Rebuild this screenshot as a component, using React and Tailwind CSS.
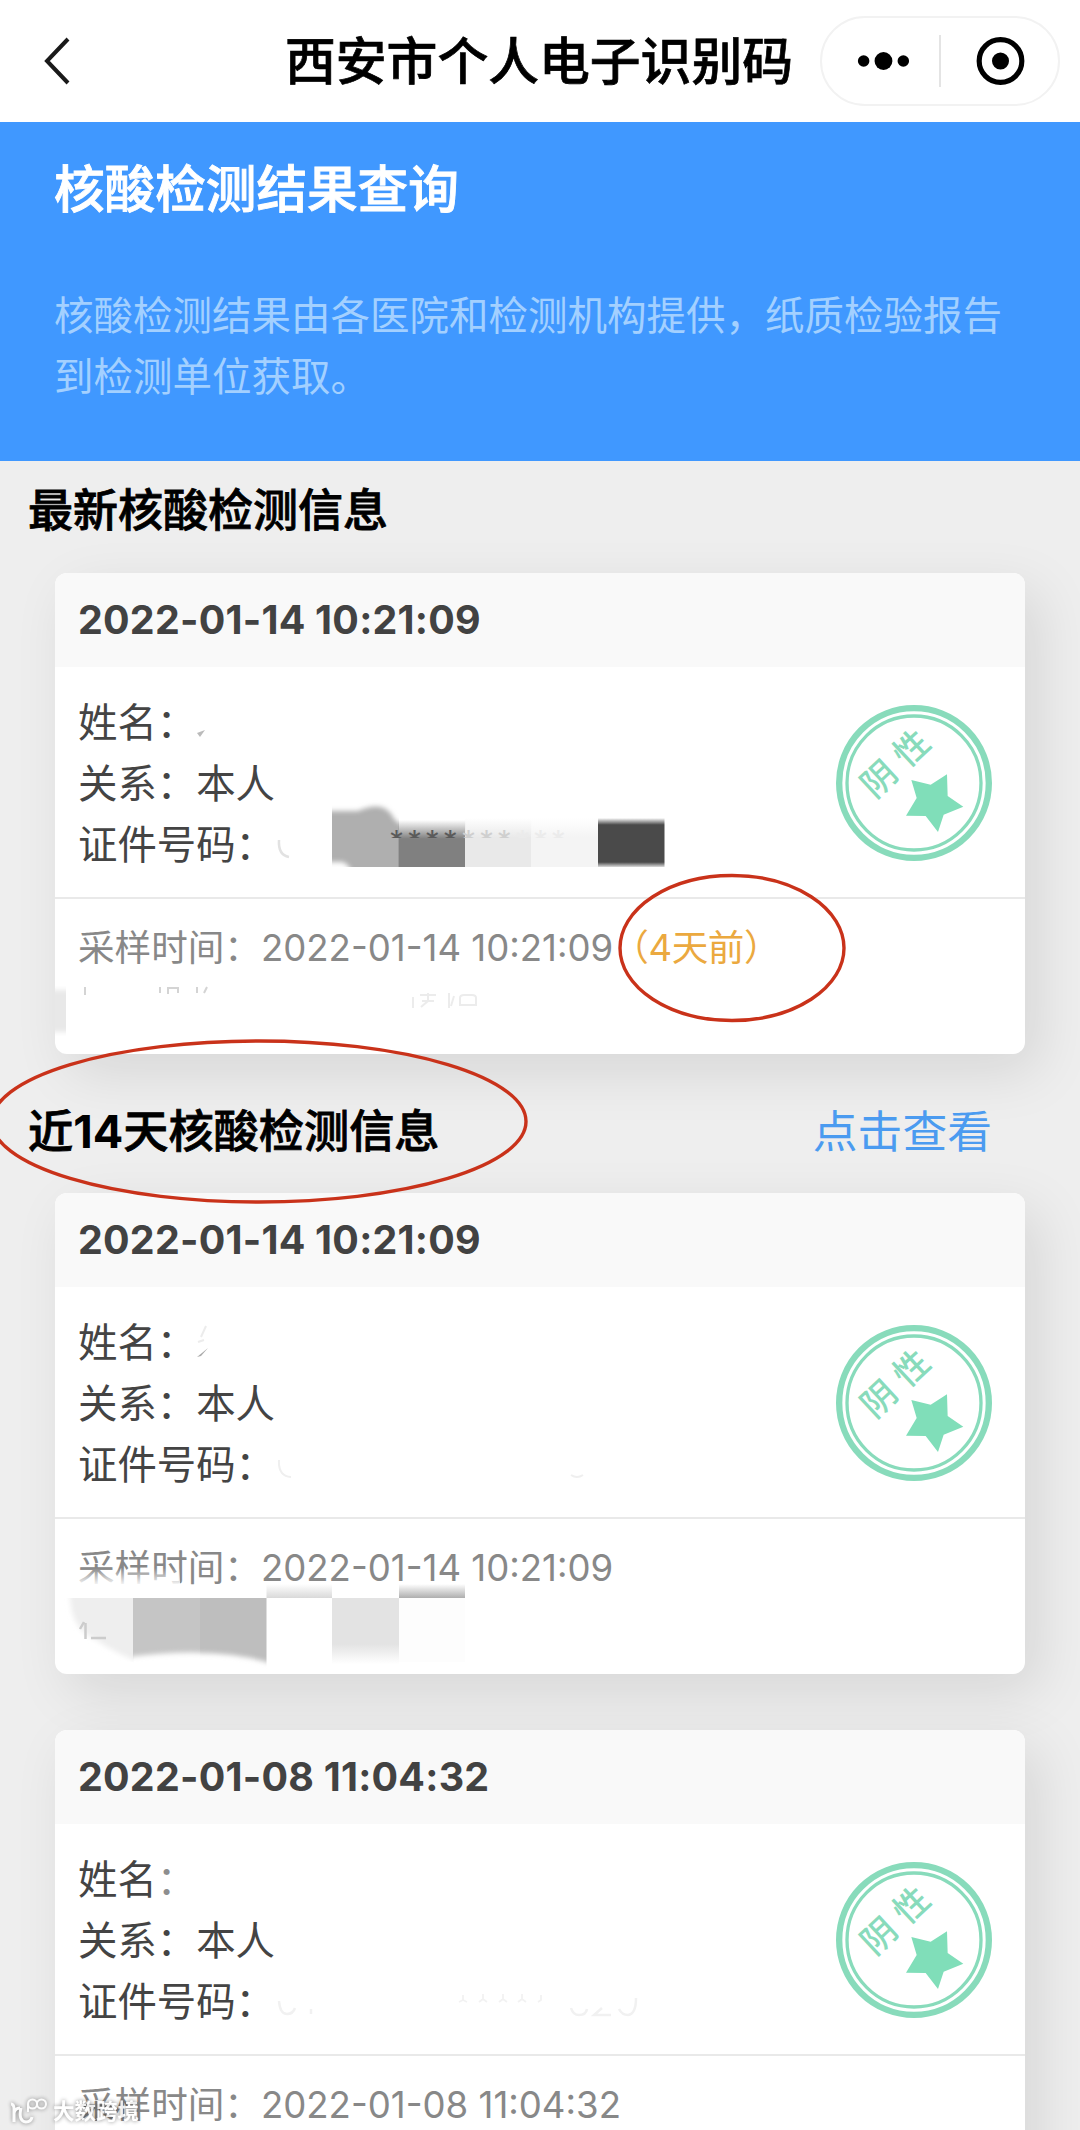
import React from 'react';

const registros = [
  { id: 1, fecha: '2022-01-14 10:21:09', hace: '（4天前）' },
  { id: 2, fecha: '2022-01-14 10:21:09' },
  { id: 3, fecha: '2022-01-08 11:04:32' },
];

function Header() {
  return (
    <header className="flex h-[122px] shrink-0 items-center bg-white pr-5 pl-[43px]">
      <svg className="h-[50px] w-[30px]" viewBox="0 0 30 50" fill="none">
        <path d="M25 3 L4 25 L25 47" stroke="#1a1a1a" strokeWidth="4" />
      </svg>
      <h1 className="mt-[2px] ml-[212px] text-[50.8px] leading-none font-medium whitespace-nowrap text-black [-webkit-text-stroke:0.7px_#000]">西安市个人电子识别码</h1>
      <div className="ml-auto flex h-[90px] w-[240px] items-center rounded-full border-2 border-[#f2f2f2]">
        <svg className="h-[50px] w-[118px]" viewBox="0 0 118 50">
          <circle cx="42" cy="25" r="5.8" />
          <circle cx="62" cy="25" r="9" />
          <circle cx="82" cy="25" r="5.8" />
        </svg>
        <div className="h-[52px] w-[2px] bg-[#e4e4e4]" />
        <svg className="h-[50px] w-[118px]" viewBox="0 0 118 50">
          <circle cx="60" cy="25" r="21.5" fill="none" stroke="#000" strokeWidth="5.2" />
          <circle cx="60" cy="25" r="8.6" />
        </svg>
      </div>
    </header>
  );
}

// sello verde de resultado negativo
function Sello() {
  return (
    <svg className="h-[156px] w-[156px]" viewBox="77 44 468 468">
      <circle cx="311" cy="278" r="224.5" fill="none" stroke="#88dbbb" strokeWidth="19" />
      <circle cx="311" cy="278" r="201" fill="none" stroke="#88dbbb" strokeWidth="10" />
      <polygon points="303,269 361,283 410,252 412,317 459,349 400,373 383,425 346,377 287,376 319,323" fill="#80deb9" />
      <g fill="#88dbbb" fontSize="104" fontWeight="500" textAnchor="middle">
        <text transform="translate(205 265) rotate(-43)" y="38">阴</text>
        <text transform="translate(303 173) rotate(-43)" y="38">性</text>
      </g>
    </svg>
  );
}

function Tapado1() {
  return (
    <svg className="absolute top-0 left-0 h-[481px] w-[970px]" viewBox="55 573 970 481">
      <defs>
        <filter id="suave" x="-20%" y="-20%" width="140%" height="140%"><feGaussianBlur stdDeviation="2.4" /></filter>
        <linearGradient id="g1" x1="0" y1="0" x2="0" y2="1">
          <stop offset="0" stopColor="#808080" stopOpacity="0" />
          <stop offset="0.4" stopColor="#808080" />
        </linearGradient>
        <linearGradient id="g2" x1="0" y1="0" x2="0" y2="1">
          <stop offset="0" stopColor="#e9e9e9" stopOpacity="0" />
          <stop offset="0.4" stopColor="#e9e9e9" />
        </linearGradient>
        <linearGradient id="g3" x1="0" y1="0" x2="0" y2="1">
          <stop offset="0" stopColor="#f4f4f4" stopOpacity="0" />
          <stop offset="0.4" stopColor="#f4f4f4" />
          <stop offset="1" stopColor="#f4f4f4" />
        </linearGradient>
        <linearGradient id="g4" x1="0" y1="0" x2="0" y2="1">
          <stop offset="0" stopColor="#4a4a4a" stopOpacity="0" />
          <stop offset="0.14" stopColor="#4a4a4a" />
          <stop offset="0.9" stopColor="#4a4a4a" />
          <stop offset="1" stopColor="#4a4a4a" stopOpacity="0.2" />
        </linearGradient>
        <clipPath id="c1"><rect x="332" y="796" width="67" height="71" /></clipPath>
        <clipPath id="c2"><rect x="380" y="826" width="220" height="12" /></clipPath>
        <clipPath id="c3"><rect x="55" y="980" width="11" height="60" /></clipPath>
      </defs>
      <path d="M197 733 L205 730 L200 737 Z" fill="#bbb" />
      <path d="M279 840 Q278 855 289 857" fill="none" stroke="#e2e2e2" strokeWidth="2.5" />
      <g clipPath="url(#c1)">
        <path d="M320 811 H358 Q385 799 394 819 Q398 824 410 828 V880 H354 Q350 863 342 862 H320 Z" fill="#afafaf" filter="url(#suave)" />
      </g>
      <rect x="398.600" y="820" width="66.600" height="47" fill="url(#g1)" />
      <rect x="465" y="818" width="66.500" height="49" fill="url(#g2)" />
      <rect x="531.500" y="818" width="66.500" height="49" fill="url(#g3)" />
      <rect x="598" y="818" width="66.500" height="49" fill="url(#g4)" />
      <g clipPath="url(#c2)" fontSize="30" fill="#5a5a5a">
        <text x="389" y="852" letterSpacing="2.9">****</text>
        <text x="461" y="852" letterSpacing="2.9" fill="#cfcfcf">***</text>
        <text x="515" y="852" letterSpacing="2.9" fill="#ebebeb">***</text>
      </g>
      {/* restos del texto borrado */}
      <g clipPath="url(#c3)">
        <rect x="50" y="990" width="30" height="42" fill="#e8e8e8" filter="url(#suave)" />
      </g>
      <g fill="none" strokeWidth="2">
        <path d="M85 987 V995 M160 987 V993 M168 994 V988 H178 V993 M197 987 V993 M207 987 L204 993" stroke="#d4d4d4" />
        <path d="M413 997 V1008 M420 995 H436 M422 1001 H434 M428 993 V1001 L421 1007 M449 993 V1008 M454 996 L451 1006 M460 998 Q460 995 464 995 H472 Q476 995 476 998 V1005 H460 Z" stroke="#ececec" />
      </g>
    </svg>
  );
}

function Tapado2() {
  return (
    <svg className="absolute top-0 left-0 h-[481px] w-[970px]" viewBox="55 1193 970 481">
      <defs>
        <linearGradient id="h1" x1="0" y1="0" x2="0" y2="1">
          <stop offset="0" stopColor="#fff" stopOpacity="0" />
          <stop offset="1" stopColor="#fff" />
        </linearGradient>
        <linearGradient id="h2" x1="0" y1="0" x2="0" y2="1">
          <stop offset="0" stopColor="#fff" />
          <stop offset="1" stopColor="#d9d9d9" />
        </linearGradient>
        <linearGradient id="h3" x1="0" y1="0" x2="0" y2="1">
          <stop offset="0" stopColor="#fff" />
          <stop offset="1" stopColor="#aeaeae" />
        </linearGradient>
        <linearGradient id="h4" x1="0" y1="0" x2="0" y2="1">
          <stop offset="0.7" stopColor="#e3e3e3" />
          <stop offset="1" stopColor="#fff" />
        </linearGradient>
        <clipPath id="d1"><rect x="60" y="1598" width="73.500" height="64" /></clipPath>
        <clipPath id="d2"><rect x="133" y="1598" width="67" height="72" /></clipPath>
        <clipPath id="d3"><rect x="200" y="1598" width="66.500" height="72" /></clipPath>
      </defs>
      <path d="M198 1342 L204 1340 M201 1337 L206 1326" fill="none" stroke="#ececec" strokeWidth="2" />
      <path d="M197 1357 L208 1348 L201 1356 Z" fill="#aaa" />
      <path d="M279 1460 Q278 1476 291 1477 M571 1475 Q577 1479 583 1475" fill="none" stroke="#efefef" strokeWidth="2" />
      <rect x="70" y="1568" width="110" height="18" fill="url(#h1)" />
      <g clipPath="url(#d1)">
        <path d="M70 1588 H145 V1664 Q118 1655 96 1640 Q68 1628 70 1588 Z" fill="#eee" filter="url(#suave)" />
      </g>
      <path d="M80 1629 L84 1622 M85.500 1623 V1639 M91 1638 H106" fill="none" stroke="#ccc" strokeWidth="2.5" />
      <g clipPath="url(#d2)">
        <path d="M120 1585 H210 V1653 Q170 1651 120 1658 Z" fill="#c5c5c5" filter="url(#suave)" />
      </g>
      <g clipPath="url(#d3)">
        <path d="M190 1585 H280 V1666 Q240 1652 190 1653 Z" fill="#bebebe" filter="url(#suave)" />
      </g>
      <rect x="266.500" y="1584" width="65.500" height="14" fill="url(#h2)" />
      <rect x="332" y="1598" width="67" height="66" fill="url(#h4)" />
      <rect x="399" y="1584" width="66" height="14" fill="url(#h3)" />
      <rect x="399" y="1598" width="66" height="64" fill="#fdfdfd" />
    </svg>
  );
}

function Tapado3() {
  return (
    <svg className="absolute top-0 left-0 h-[400px] w-[970px]" viewBox="55 1730 970 400">
      <rect x="160" y="1866" width="14" height="30" fill="#fff" opacity="0.4" />
      <g fill="none" stroke="#f1f1f1" strokeWidth="2.5">
        <path d="M279 2001 Q280 2014 287 2014 Q293 2014 295 2008 M311 2009 V2014" />
        <path d="M571 2008 Q573 2015 579 2015 Q586 2015 587 2009 M602 2008 L594 2015 H611 M619 2009 Q622 2015 628 2015 Q636 2014 636 1998" />
      </g>
      <g fill="none" stroke="#f2f2f2" strokeWidth="1.800">
        <path d="M463 1995 V2000 L459 2002 M463 2000 L467 2002 M483 1994 V1999 L479 2002 M483 1999 L487 2002 M503 1994 V1999 L499 2002 M503 1999 L507 2002 M522 1994 V1999 L518 2002 M522 1999 L526 2002 M541 1995 V2000 L538 2002" />
      </g>
    </svg>
  );
}

function Tarjeta({ registro, children }) {
  return (
    <article className="relative mr-[55px] ml-[55px] h-[481px] shrink-0 rounded-xl bg-white shadow-[14px_18px_56px_rgba(0,0,0,0.1)]">
      <div className="flex h-[94px] items-center rounded-t-xl bg-[#f9f9f9] px-[23px] pt-[2px]">
        <h3 className="text-[39.4px] leading-none font-bold tracking-[0.25px] whitespace-nowrap text-[#424242]">{registro.fecha}</h3>
      </div>
      <div className="flex h-[232px] justify-between border-b-2 border-[#e9e9e9] pt-[26px] pr-[33px] pl-[23px] text-[39.4px] leading-[61px] text-[#444]">
        <div>
          <p>姓名：</p>
          <p>关系：本人</p>
          <p>证件号码：</p>
        </div>
        <div className="mt-[12px]">
          <Sello />
        </div>
      </div>
      <p className="flex pt-[19px] pl-[23px] text-[36.6px] leading-[61px] whitespace-nowrap text-[#888]">
        <span>采样时间：</span>
        <span>{registro.fecha}</span>
        {registro.hace && <span className="-ml-px tracking-[-0.4px] text-[#eba93f]">{registro.hace}</span>}
      </p>
      {children}
    </article>
  );
}

export default function App() {
  return (
    <div className="relative flex h-[2130px] w-[1080px] flex-col overflow-hidden bg-[#eee] font-[Inter,'Noto_Sans_CJK_SC',sans-serif]">
      <Header />
      <section className="h-[339px] shrink-0 bg-[#4098ff] px-[54px] pt-[41px]">
        <h2 className="text-[50.6px] leading-[54px] font-medium text-white [-webkit-text-stroke:0.9px_#fff]">核酸检测结果查询</h2>
        <p className="mt-[69px] text-[39.5px] leading-[61px] whitespace-nowrap text-[#a3d0ff]">
          核酸检测结果由各医院和检测机构提供，纸质检验报告
          <br />
          到检测单位获取。
        </p>
      </section>

      <div className="flex h-[112px] shrink-0 items-start pt-[20px] pl-[28px]">
        <h2 className="text-[45px] leading-[60px] font-medium text-black [-webkit-text-stroke:0.8px_#000]">最新核酸检测信息</h2>
      </div>
      <Tarjeta registro={registros[0]}>
        <Tapado1 />
      </Tarjeta>

      <div className="relative flex h-[139px] shrink-0 items-center justify-between pt-[16px] pr-[88px] pl-[28px]">
        <h2 className="text-[45.2px] leading-[60px] font-medium text-black [-webkit-text-stroke:0.8px_#000]">近<b className="font-bold [-webkit-text-stroke:0px]">14</b>天核酸检测信息</h2>
        <a className="text-[44.8px] leading-[60px] text-[#4b9bf0]">点击查看</a>
      </div>
      <Tarjeta registro={registros[1]}>
        <Tapado2 />
      </Tarjeta>
      <div className="h-14 shrink-0" />
      <Tarjeta registro={registros[2]}>
        <Tapado3 />
      </Tarjeta>

      {/* círculos rojos */}
      <svg className="absolute top-0 left-0 h-[2130px] w-[1080px]" viewBox="0 0 1080 2130" fill="none" stroke="#c9321a" strokeWidth="3.4">
        <ellipse cx="732" cy="948" rx="112" ry="72.500" />
        <ellipse cx="259" cy="1121.500" rx="267" ry="80.500" />
      </svg>

      {/* marca de agua */}
      <div className="absolute top-[2092px] left-[9px] flex items-center gap-1 opacity-85 drop-shadow-[0_0_2px_rgba(0,0,0,0.55)]">
        <svg className="h-[30px] w-[40px]" viewBox="0 0 40 30" fill="none" stroke="#fff" strokeWidth="3">
          <path d="M2 8 Q5 8 5 13 V26 M5 17 Q6 12 11 12 M12 12 Q9 25 17 26 Q22 26 23 21" />
          <path d="M19 16 V8" strokeWidth="2" />
          <circle cx="23.500" cy="8" r="4.500" strokeWidth="2" />
          <circle cx="32.500" cy="8" r="4.500" strokeWidth="2" />
        </svg>
        <span className="text-[21.5px] leading-[38px] font-bold text-white">大数跨境</span>
      </div>
    </div>
  );
}
